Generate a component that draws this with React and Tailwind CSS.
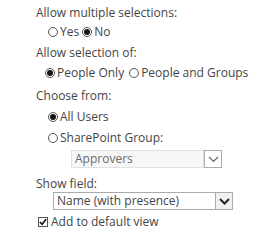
import React from 'react';

const Radio = ({ checked, label }) => (
    <span className="inline-flex items-center">
        <span className="w-[10px] h-[10px] rounded-full border border-[#555] bg-white flex items-center justify-center mr-[2px]">
            {checked && <span className="w-[6px] h-[6px] rounded-full bg-[#111]" />}
        </span>
        <span>{label}</span>
    </span>
);

const Chevron = ({ color, width }) => (
    <svg width="11" height="7" viewBox="0 0 11 7">
        <path d="M1 1 L5.5 5.5 L10 1" fill="none" stroke={color} strokeWidth={width} />
    </svg>
);

export default function App() {
    return (
        <div className="w-[275px] h-[244px] bg-white text-[#444] text-[12px] leading-[16px] pl-[36px] pt-[5px]" style={{ fontFamily: '"Open Sans", "Liberation Sans", sans-serif' }}>
            {/* Allow multiple */}
            <div>Allow multiple selections:</div>
            <div className="pl-[12px] mt-[3px] flex gap-[3px]">
                <Radio label="Yes" />
                <Radio checked label="No" />
            </div>

            {/* Allow selection of */}
            <div className="mt-[5px]">Allow selection of:</div>
            <div className="pl-[9px] mt-[4px] flex gap-[5px]">
                <Radio checked label="People Only" />
                <Radio label="People and Groups" />
            </div>

            {/* Choose from */}
            <div className="mt-[7px]">Choose from:</div>
            <div className="pl-[12px] mt-[4px]">
                <Radio checked label="All Users" />
            </div>
            <div className="pl-[12px] mt-[5px]">
                <Radio label="SharePoint Group:" />
            </div>
            <div className="ml-[35px] mt-[3px] w-[151px] h-[18px] flex">
                <div className="flex-1 border border-[#e1e1e1] bg-[#f7f7f7] text-[#6a6a6a] pl-[3px] leading-[16px]">Approvers</div>
                <div className="w-[18px] border border-[#ababab] bg-white flex items-center justify-center">
                    <Chevron color="#666" width="1.2" />
                </div>
            </div>

            {/* Show field */}
            <div className="mt-[8px]">Show field:</div>
            <div className="ml-[17px] mt-0 w-[180px] h-[18px] flex border border-[#ababab] bg-white">
                <div className="flex-1 text-[#444] pl-[3px] leading-[16px]">Name (with presence)</div>
                <div className="w-[17px] border-l border-[#ababab] bg-[#f0f0f0] flex items-center justify-center">
                    <Chevron color="#222" width="2" />
                </div>
            </div>

            {/* Add to default view */}
            <div className="mt-[4px] flex items-center">
                <span className="w-[10px] h-[10px] border border-[#555] bg-white flex items-center justify-center mr-[3px] ml-[2px]">
                    <svg width="9" height="8" viewBox="0 0 9 8">
                        <path d="M1 4 L3.5 6.5 L8 1" fill="none" stroke="#111" strokeWidth="1.8" />
                    </svg>
                </span>
                <span>Add to default view</span>
            </div>
        </div>
    );
}
